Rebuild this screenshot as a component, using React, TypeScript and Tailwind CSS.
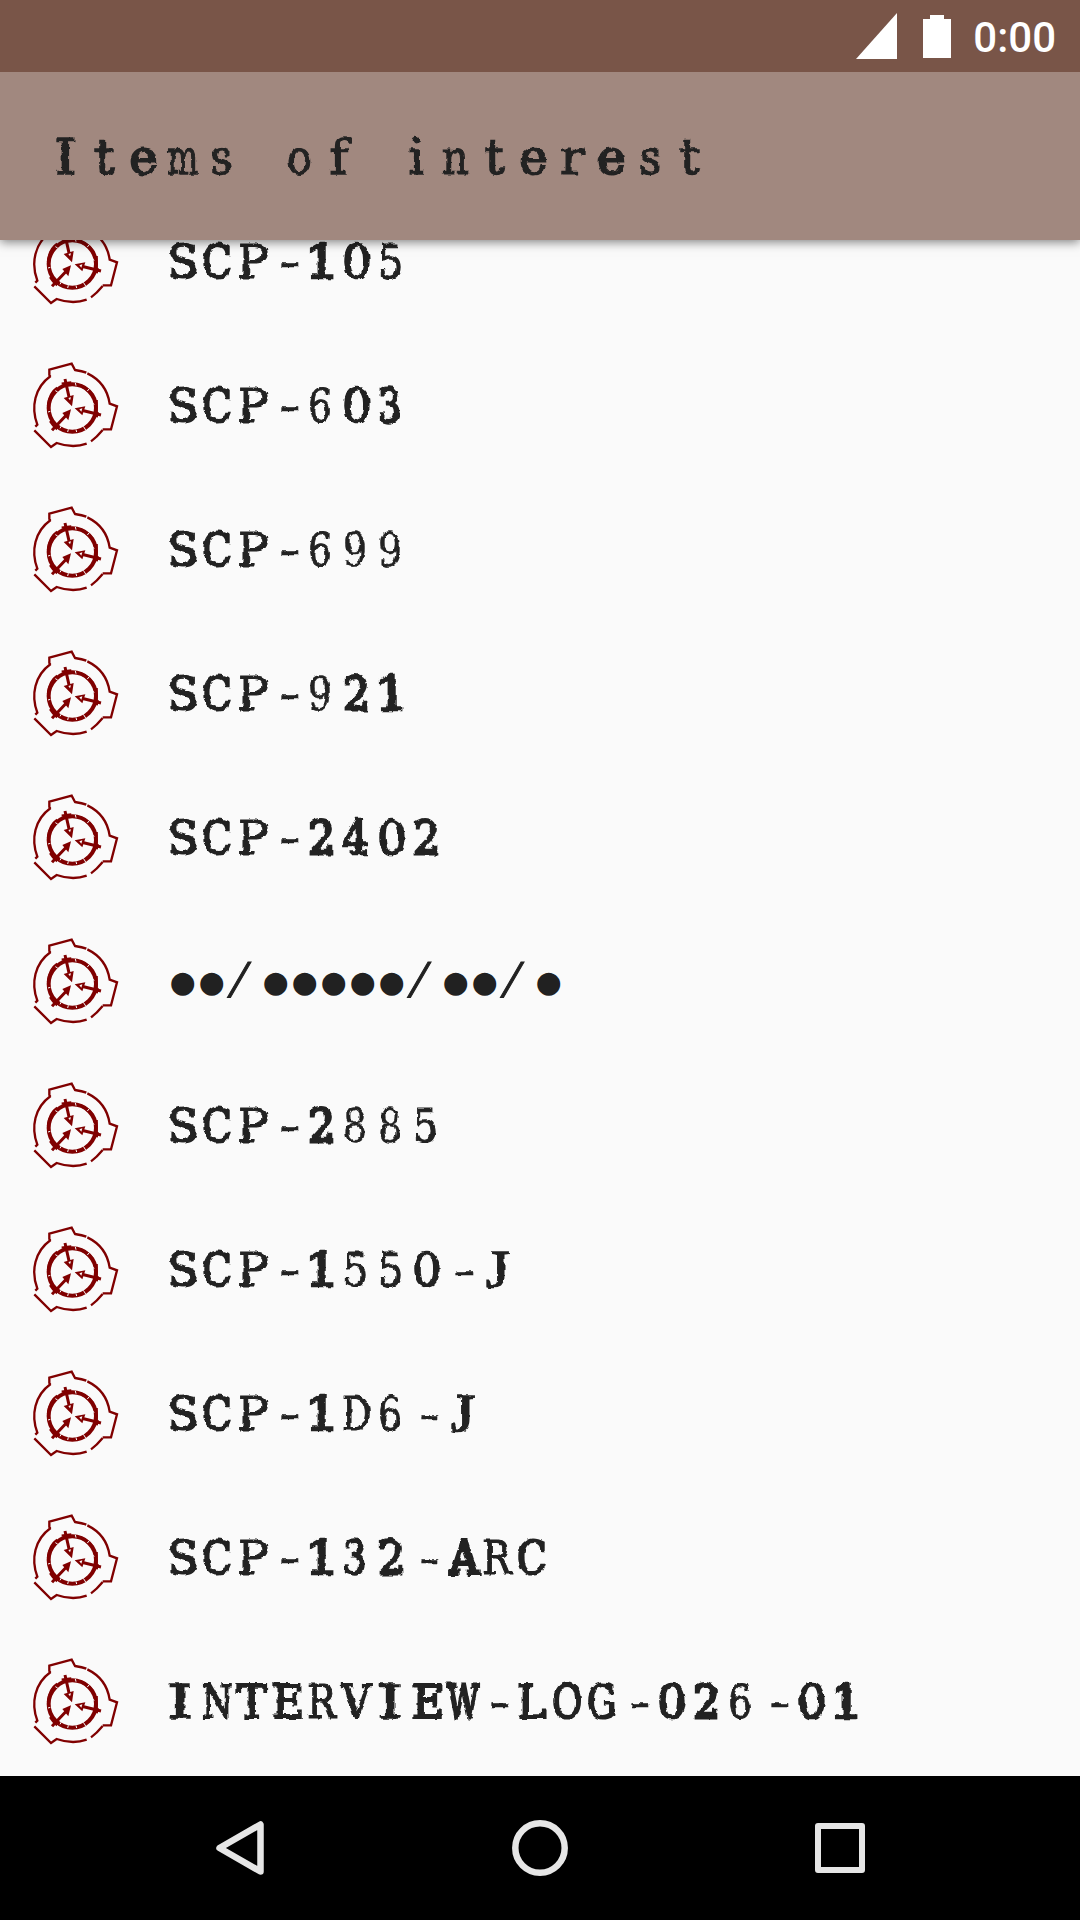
import React from "react";

const items = [
  "SCP-105",
  "SCP-603",
  "SCP-699",
  "SCP-921",
  "SCP-2402",
  "●●/●●●●●/●●/●",
  "SCP-2885",
  "SCP-1550-J",
  "SCP-1D6-J",
  "SCP-132-ARC",
  "INTERVIEW-LOG-026-01",
];

/* Width and ink weight of each typewriter letter. */
const glyphs: Record<string, string> = {
  S: "scale-x-[1.02] [-webkit-text-stroke:1.8px_#212121]",
  C: "scale-x-[.85] [-webkit-text-stroke:2.2px_#212121]",
  P: "scale-x-[1.03] [-webkit-text-stroke:1px_#212121]",
  "-": "ml-[7px] scale-x-[1.4] [-webkit-text-stroke:.5px_#212121]",
  "1": "-ml-[2px] scale-x-[1.14] [-webkit-text-stroke:2.6px_#212121]",
  "2": "ml-px scale-x-[.93] [-webkit-text-stroke:2.8px_#212121]",
  "3": "ml-px scale-x-[.8] [-webkit-text-stroke:2.4px_#212121]",
  "4": "scale-x-[.92] [-webkit-text-stroke:2.6px_#212121]",
  "5": "ml-px scale-x-[.86] [-webkit-text-stroke:1.2px_#212121]",
  "6": "ml-px scale-x-[.82] [-webkit-text-stroke:.8px_#212121]",
  "8": "ml-px scale-x-[.82] [-webkit-text-stroke:.4px_#212121]",
  "9": "ml-px scale-x-[.82] [-webkit-text-stroke:.6px_#212121]",
  "0": "scale-x-[1.02] [-webkit-text-stroke:1.7px_#212121]",
  I: "scale-x-[1.45] [-webkit-text-stroke:1.4px_#212121]",
  N: "scale-x-[.76] [-webkit-text-stroke:2px_#212121]",
  T: "scale-x-[.96] [-webkit-text-stroke:2.2px_#212121]",
  E: "scale-x-[.96] [-webkit-text-stroke:2.2px_#212121]",
  R: "scale-x-[.84] [-webkit-text-stroke:1px_#212121]",
  V: "scale-x-[.86] [-webkit-text-stroke:1.8px_#212121]",
  W: "scale-x-[.68] [-webkit-text-stroke:3px_#212121]",
  L: "scale-x-[.97] [-webkit-text-stroke:2px_#212121]",
  O: "scale-x-[.8] [-webkit-text-stroke:2.2px_#212121]",
  G: "scale-x-[.8] [-webkit-text-stroke:2.2px_#212121]",
  A: "ml-[3px] scale-x-[.86] [-webkit-text-stroke:4px_#212121]",
  D: "scale-x-[.8] [-webkit-text-stroke:1px_#212121]",
  J: "ml-1 scale-x-[1.15] font-['Liberation_Serif',serif] text-[52px] [-webkit-text-stroke:1.6px_#212121]",
};

const titleGlyphs: Record<string, string> = {
  I: "scale-x-[1.2] [-webkit-text-stroke:1.4px_#212121]",
  m: "scale-x-[.68] [-webkit-text-stroke:1.4px_#212121]",
  e: "scale-x-100 [-webkit-text-stroke:2px_#212121]",
  n: "scale-x-[.88] [-webkit-text-stroke:1.2px_#212121]",
  s: "scale-x-[.88] [-webkit-text-stroke:1.4px_#212121]",
  o: "scale-x-[.86] [-webkit-text-stroke:1.2px_#212121]",
  r: "scale-x-110 [-webkit-text-stroke:1.2px_#212121]",
};

function Glyph({ ch }: { ch: string }) {
  if (ch === "●") {
    return (
      <span className="flex w-[29px] justify-center font-['DejaVu_Sans',sans-serif] text-[30px]">
        {ch}
      </span>
    );
  }
  if (ch === "/") {
    return (
      <span className="-mt-[2px] flex w-[35px] pl-[4px] font-['Liberation_Serif',serif] text-[52px] italic">
        <span className="inline-block origin-left scale-x-[1.15] [-webkit-text-stroke:.8px_#212121]">
          {ch}
        </span>
      </span>
    );
  }
  return (
    <span className="flex w-[35px]">
      <span className={`inline-block origin-left ${glyphs[ch]}`}>{ch}</span>
    </span>
  );
}

function Logo() {
  return (
    <svg
      viewBox="0 0 330 330"
      className="ml-5 h-[110px] w-[110px] shrink-0"
      fill="none"
      stroke="#800000"
      strokeWidth="7"
    >
      <path d="M91 80L88 75V59L155 41L165 60Q187 63 199 68" />
      <path d="M202 70Q260 98 269 161L291 169L273 238H248" />
      <path d="M92 78C44 112 32 171 52 224L46 230" />
      <path d="M43 241L93 291L110 279Q158 296 200 281" />
      <path d="M248 240Q230 262 213 274" />
      <circle cx="157" cy="174" r="71" strokeWidth="12" />
      <path
        d="M85 168Q88 130 112 114M180 106Q206 116 218 136M229 150V199M91 213Q100 228 112 237"
        strokeWidth="9"
      />
      <path d="M135 87L148 145M96 241L140 194M243 195L182 180" strokeWidth="9" />
      <path d="M125 101L154 97M98 216L113 234M233 186L230 202" strokeWidth="7" />
      <path
        d="M131 144L161 135L156 169ZM127 189L153 178L145 211ZM164 175L196 169L187 196Z"
        fill="#800000"
        stroke="none"
      />
      <path d="M145 144L153 142L150 151ZM178 178L187 175L184 185Z" fill="#fafafa" stroke="none" />
      <path
        d="M106 122L113 126M166 99L168 107M208 116L202 123M84 186L91 184M120 235L124 228M143 246L145 238M170 246L168 239M197 240L190 229M218 160L223 163"
        stroke="#fafafa"
        strokeWidth="3"
      />
    </svg>
  );
}

export default function App() {
  return (
    <div className="flex h-[1920px] w-[1080px] flex-col overflow-hidden bg-[#fafafa] text-[#212121]">
      <svg className="absolute h-0 w-0">
        <filter id="worn" x="-5%" y="-30%" width="110%" height="160%">
          <feTurbulence type="fractalNoise" baseFrequency="0.14" numOctaves="2" seed="4" />
          <feDisplacementMap in="SourceGraphic" scale="4" xChannelSelector="R" yChannelSelector="G" />
        </filter>
      </svg>

      <div className="z-20 flex h-[72px] shrink-0 items-center justify-end bg-[#795548] pr-[24px] text-white">
        <svg width="42" height="46" viewBox="0 0 42 46" className="mr-[25px]" fill="white">
          <path d="M0 46L41 0V46Z" />
        </svg>
        <svg width="28" height="43" viewBox="0 0 28 43" className="mr-[22px]" fill="white">
          <path d="M7 0H21V4H28V43H0V4H7Z" />
        </svg>
        <span className="pt-[3px] font-[Roboto,sans-serif] text-[42px] font-medium leading-[69px]">
          0:00
        </span>
      </div>

      <header className="z-10 flex h-[168px] shrink-0 items-center bg-[#a1887f] pl-[46px] shadow-[0_2px_10px_rgba(0,0,0,0.5)]">
        <h1 className="flex whitespace-pre pt-px font-['DejaVu_Serif',serif] text-[48px] leading-[60px] [filter:url(#worn)]">
          {[..."Items of interest"].map((ch, i) => (
            <span key={i} className="flex w-[39px] justify-center">
              <span
                className={`inline-block ${titleGlyphs[ch] ?? "scale-x-105 [-webkit-text-stroke:1.4px_#212121]"}`}
              >
                {ch}
              </span>
            </span>
          ))}
        </h1>
      </header>

      <main className="min-h-0 flex-1 overflow-hidden">
        <ul className="-mt-[51px]">
          {items.map((item) => (
            <li key={item} className="flex h-36 items-center">
              <Logo />
              <div
                className={`flex font-['DejaVu_Serif',serif] text-[46px] leading-[40px] ${
                  item.includes("●") ? "ml-[38px] pt-0.5" : "ml-[37px] pt-px [filter:url(#worn)]"
                }`}
              >
                {[...item].map((ch, i) => (
                  <Glyph key={i} ch={ch} />
                ))}
              </div>
            </li>
          ))}
        </ul>
      </main>

      <nav className="flex h-36 shrink-0 items-center justify-center gap-[244px] bg-black">
        <svg width="56" height="56" viewBox="0 0 56 56" fill="none" stroke="#e6e6e6" strokeWidth="6.5" strokeLinejoin="round">
          <path d="M7.5 28L48.5 4.5V51.5Z" />
        </svg>
        <svg width="56" height="56" viewBox="0 0 56 56" fill="none" stroke="#e6e6e6" strokeWidth="6.5">
          <circle cx="28" cy="28" r="24.7" />
        </svg>
        <svg width="56" height="56" viewBox="0 0 56 56" fill="none" stroke="#e6e6e6" strokeWidth="6" strokeLinejoin="round">
          <rect x="6" y="6" width="44" height="44" />
        </svg>
      </nav>
    </div>
  );
}
